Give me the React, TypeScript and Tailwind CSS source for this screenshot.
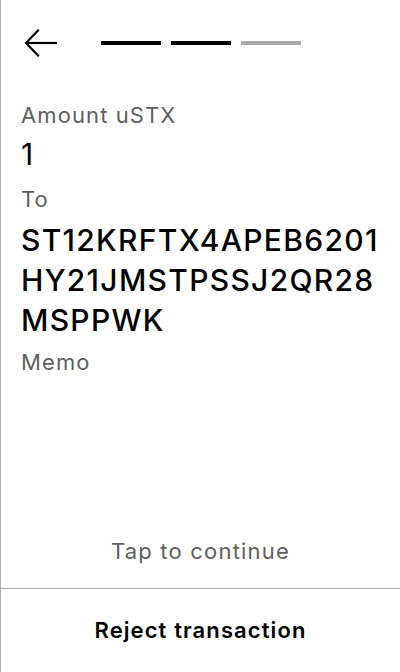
import React from 'react';

const font = { fontFamily: 'Inter, "Noto Sans", sans-serif' };

const BackArrow = () => (
    <svg width="40" height="32" viewBox="0 0 40 32" fill="none" stroke="#000" strokeWidth="2.2">
        <path d="M5 14 H36" />
        <path d="M17 1.5 L5 14 L17 26.5" strokeLinecap="square" />
    </svg>
);

const address = ['ST12KRFTX4APEB6201', 'HY21JMSTPSSJ2QR28', 'MSPPWK'];

export default function App() {
    const steps = [true, true, false];

    return (
        <div style={font} className="w-[400px] h-[672px] bg-white border-l border-[#aaaaaa] flex flex-col text-black">
            {/* HEADER */}
            <div className="h-[86px] flex items-center pl-5 shrink-0">
                <div className="w-[80px] flex items-center pt-[3px]">
                    <BackArrow />
                </div>
                <div className="flex gap-[10px]">
                    {steps.map((done, i) => (
                        <div key={i} className={`w-[60px] h-[4px] ${done ? 'bg-black' : 'bg-[#aaaaaa]'}`} />
                    ))}
                </div>
            </div>

            {/* FIELDS */}
            <div className="flex-1 px-5 pt-[15px]">
                <div className="text-[22px] leading-[28px] tracking-[1.1px] text-[#5f5f5f]">Amount uSTX</div>
                <div className="mt-[5px] text-[30px] leading-[40px] tracking-[1.3px]">1</div>
                <div className="mt-[11px] text-[22px] leading-[28px] tracking-[1.1px] text-[#5f5f5f]">To</div>
                <div className="mt-[7px] text-[30px] leading-[40px] tracking-[1.3px] font-medium">
                    {address.map(line => (
                        <div key={line}>{line}</div>
                    ))}
                </div>
                <div className="mt-2 text-[22px] leading-[28px] tracking-[1.1px] text-[#5f5f5f]">Memo</div>
            </div>

            {/* FOOTER */}
            <div className="text-center text-[22px] leading-[28px] tracking-[1.2px] text-[#5f5f5f] mb-[23px]">Tap to continue</div>
            <button className="h-[84px] border-t border-[#aaaaaa] flex items-center justify-center text-[22px] tracking-[1.1px] font-semibold shrink-0">
                Reject transaction
            </button>
        </div>
    );
}
